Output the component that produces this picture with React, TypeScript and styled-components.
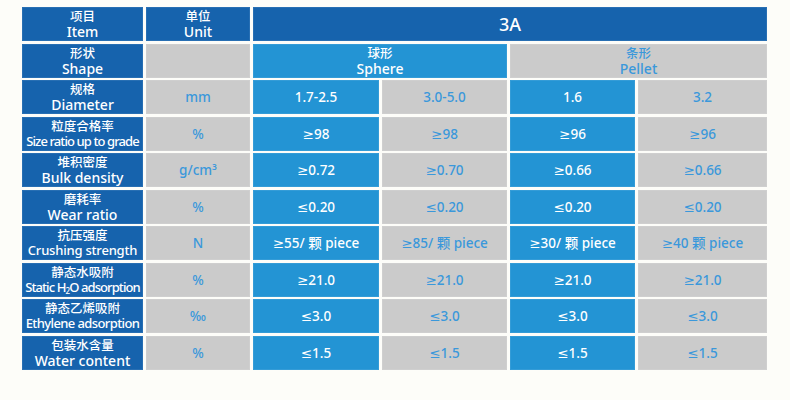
import React from "react";
import styled, { createGlobalStyle } from "styled-components";

const GlobalStyle = createGlobalStyle`
  html, body {
    margin: 0;
    padding: 0;
    background: #fdfdf9;
  }
  body {
    font-family: "Noto Sans", "DejaVu Sans", "Noto Sans CJK SC", sans-serif;
  }
`;

const Page = styled.div`
  padding: 7px 0 0 22px;
`;

const Table = styled.div`
  display: grid;
  grid-template-columns: 121px 104px 126px 125px 125px 129px;
  grid-auto-rows: 34px;
  column-gap: 3px;
  row-gap: 2.5px;
  width: 745px;
`;

type Tone = "dark" | "light" | "gray";

const bg: Record<Tone, string> = {
  dark: "#1663ad",
  light: "#2394d4",
  gray: "#cbcbcb",
};

const fg: Record<Tone, string> = {
  dark: "#ffffff",
  light: "#ffffff",
  gray: "#3a98db",
};

const Cell = styled.div<{ $tone: Tone; $span?: number }>`
  grid-column: span ${(p) => p.$span ?? 1};
  background: ${(p) => bg[p.$tone]};
  color: ${(p) => fg[p.$tone]};
  box-shadow: inset 0 0 0 1px rgba(255, 255, 255, 0.08);
  display: flex;
  flex-direction: column;
  align-items: center;
  justify-content: center;
  gap: 1px;
  text-align: center;
  overflow: hidden;
  white-space: nowrap;
`;

const Zh = styled.span`
  font-family: "Noto Sans CJK SC", sans-serif;
  font-size: 12.5px;
  line-height: 14px;
  font-weight: 500;
`;

const En = styled.span<{ $squeeze?: number }>`
  font-size: ${(p) => (p.$squeeze ? "13px" : "14px")};
  line-height: 15px;
  font-weight: 500;
  letter-spacing: ${(p) => (p.$squeeze ? `-${p.$squeeze}px` : "0")};
`;

const Value = styled.span`
  font-family: "Noto Sans", "DejaVu Sans", "Noto Sans CJK SC", sans-serif;
  font-size: 13.5px;
  line-height: 16px;
  font-weight: 500;
`;

const Big = styled.span`
  font-size: 18px;
  line-height: 20px;
  font-weight: 500;
`;

const Sub = styled.sub`
  font-size: 8px;
  line-height: 0;
  vertical-align: -2px;
`;

type Row = {
  zh: string;
  en: React.ReactNode;
  squeeze?: number;
  unit: React.ReactNode;
  v: [string, string, string, string];
};

const rows: Row[] = [
  { zh: "规格", en: "Diameter", unit: "mm", v: ["1.7-2.5", "3.0-5.0", "1.6", "3.2"] },
  { zh: "粒度合格率", en: "Size ratio up to grade", squeeze: 0.9, unit: "%", v: ["≥98", "≥98", "≥96", "≥96"] },
  { zh: "堆积密度", en: "Bulk density", unit: "g/cm³", v: ["≥0.72", "≥0.70", "≥0.66", "≥0.66"] },
  { zh: "磨耗率", en: "Wear ratio", unit: "%", v: ["≤0.20", "≤0.20", "≤0.20", "≤0.20"] },
  { zh: "抗压强度", en: "Crushing strength", squeeze: 0.2, unit: "N", v: ["≥55/ 颗 piece", "≥85/ 颗 piece", "≥30/ 颗 piece", "≥40 颗 piece"] },
  {
    zh: "静态水吸附",
    en: (
      <>
        Static H<Sub>2</Sub>O adsorption
      </>
    ),
    squeeze: 0.9,
    unit: "%",
    v: ["≥21.0", "≥21.0", "≥21.0", "≥21.0"],
  },
  { zh: "静态乙烯吸附", en: "Ethylene adsorption", squeeze: 0.6, unit: "‰", v: ["≤3.0", "≤3.0", "≤3.0", "≤3.0"] },
  { zh: "包装水含量", en: "Water content", unit: "%", v: ["≤1.5", "≤1.5", "≤1.5", "≤1.5"] },
];

const valueTones: Tone[] = ["light", "gray", "light", "gray"];

export default function App() {
  return (
    <>
      <GlobalStyle />
      <Page>
        <Table>
          <Cell $tone="dark">
            <Zh>项目</Zh>
            <En>Item</En>
          </Cell>
          <Cell $tone="dark">
            <Zh>单位</Zh>
            <En>Unit</En>
          </Cell>
          <Cell $tone="dark" $span={4}>
            <Big>3A</Big>
          </Cell>

          <Cell $tone="dark">
            <Zh>形状</Zh>
            <En>Shape</En>
          </Cell>
          <Cell $tone="gray" />
          <Cell $tone="light" $span={2}>
            <Zh>球形</Zh>
            <En>Sphere</En>
          </Cell>
          <Cell $tone="gray" $span={2}>
            <Zh>条形</Zh>
            <En>Pellet</En>
          </Cell>

          {rows.map((r) => (
            <React.Fragment key={r.zh}>
              <Cell $tone="dark">
                <Zh>{r.zh}</Zh>
                <En $squeeze={r.squeeze}>{r.en}</En>
              </Cell>
              <Cell $tone="gray">
                <Value>{r.unit}</Value>
              </Cell>
              {r.v.map((val, i) => (
                <Cell key={i} $tone={valueTones[i]}>
                  <Value>{val}</Value>
                </Cell>
              ))}
            </React.Fragment>
          ))}
        </Table>
      </Page>
    </>
  );
}
